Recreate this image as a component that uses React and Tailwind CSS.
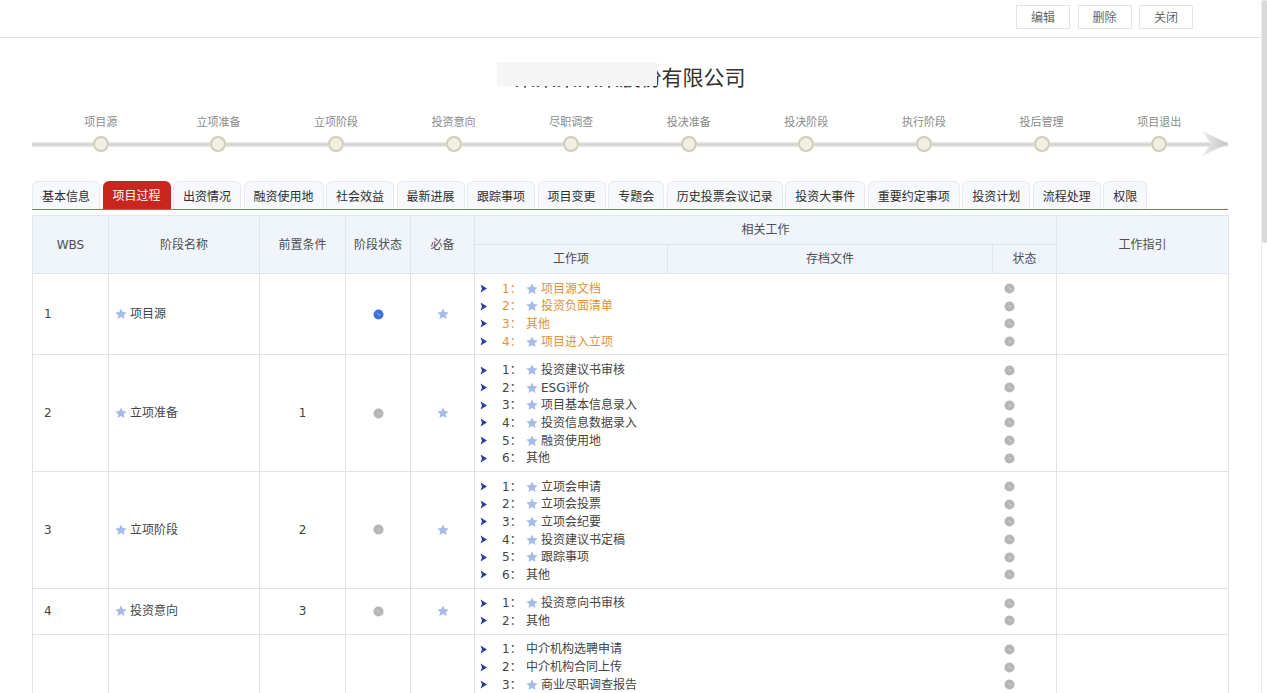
const stages = ['项目源', '立项准备', '立项阶段', '投资意向', '尽职调查', '投决准备', '投决阶段', '执行阶段', '投后管理', '项目退出'];

const tabs = ['基本信息', '项目过程', '出资情况', '融资使用地', '社会效益', '最新进展', '跟踪事项', '项目变更', '专题会', '历史投票会议记录', '投资大事件', '重要约定事项', '投资计划', '流程处理', '权限'];

const rows = [
  {
    wbs: '1', name: '项目源', pre: '', active: true, orange: true,
    items: [['项目源文档', true], ['投资负面清单', true], ['其他', false], ['项目进入立项', true]],
  },
  {
    wbs: '2', name: '立项准备', pre: '1',
    items: [['投资建议书审核', true], ['ESG评价', true], ['项目基本信息录入', true], ['投资信息数据录入', true], ['融资使用地', true], ['其他', false]],
  },
  {
    wbs: '3', name: '立项阶段', pre: '2',
    items: [['立项会申请', true], ['立项会投票', true], ['立项会纪要', true], ['投资建议书定稿', true], ['跟踪事项', true], ['其他', false]],
  },
  {
    wbs: '4', name: '投资意向', pre: '3',
    items: [['投资意向书审核', true], ['其他', false]],
  },
  {
    // cut off by the bottom of the window, only the work items show
    cropped: true,
    items: [['中介机构选聘申请', false], ['中介机构合同上传', false], ['商业尽职调查报告', true]],
  },
];

const Star = ({ className }) => (
  <svg viewBox="0 0 24 24" className={className}>
    <path d="M12 1l3.4 7.2 7.9.9-5.9 5.3 1.7 7.8L12 18.2 4.9 22.200l1.700-7.800L.7 9.100l7.900-.9z" fill="#a6bbe8" />
  </svg>
);

const StatusDot = ({ active }) => (
  <svg viewBox="0 0 12 12" className="h-[11px] w-[11px]">
    <circle cx="6" cy="6" r="5.5" fill={active ? '#3f72d6' : '#b6b6b6'} />
    <path d="M4.6 4.600L6.200 6.200L8 6.600" fill="none" stroke={active ? '#a9c4f2' : '#d6d6d6'} strokeWidth="1" />
  </svg>
);

const Bullet = () => (
  <svg viewBox="0 0 7 9" className="h-[9px] w-[7px] shrink-0">
    <path d="M0.500 0.500L7 4.500L0.500 8.500L2 4.500z" fill="#2a3c9e" />
  </svg>
);

const Rail = ({ className }) => (
  <div className={`h-[5px] bg-linear-to-b from-[#ebebe8] via-[#d2d2ce] to-[#ebebe8] ${className}`} />
);

const Timeline = () => (
  <div className="relative mt-[24px] flex items-end">
    <div className="flex h-[16px] w-[10px] items-center">
      <Rail className="w-full" />
    </div>
    {stages.map((stage) => (
      <div key={stage} className="flex w-[117.6px] flex-col items-center">
        <div className="mb-[6px] h-[15px] text-[11px] leading-[16px] text-[#8a8a8a]">{stage}</div>
        <div className="flex h-[16px] w-full items-center">
          <Rail className="flex-1" />
          <div className="h-[16px] w-[16px] rounded-full border-2 border-[#cfcdb8] bg-[#f0f0e2]" />
          <Rail className="flex-1" />
        </div>
      </div>
    ))}
    <div className="flex h-[16px] flex-1 items-center">
      <Rail className="w-full" />
    </div>
    <svg viewBox="0 0 26 26" className="absolute right-0 bottom-[-5px] h-[26px] w-[26px]">
      <defs>
        <linearGradient id="arrowFill" x1="0" y1="0" x2="1" y2="0">
          <stop offset="0" stopColor="#ededed" />
          <stop offset="1" stopColor="#c2c2c2" />
        </linearGradient>
      </defs>
      <path d="M0 0L26 12.500L0 25L9 12.500z" fill="url(#arrowFill)" />
    </svg>
  </div>
);

const WorkItem = ({ index, label, starred }) => (
  <div className="flex h-[17.6px] items-center">
    <Bullet />
    <span className="ml-[15px] w-[24px] shrink-0 whitespace-nowrap">{index}：</span>
    {starred && <Star className="mr-[3px] h-[12px] w-[12px] shrink-0" />}
    <span className="whitespace-nowrap">{label}</span>
  </div>
);

const headCell = 'border border-[#dde4ef] bg-[#f0f5fc] text-center font-normal text-[#4d4d4d]';
const bodyCell = 'border border-[#e2e2e6] align-middle';

const App = () => {
  return (
    <div className="relative h-[693px] overflow-hidden bg-white font-['DejaVu_Sans','Noto_Sans_CJK_SC',sans-serif] text-[12px] text-[#444]">
      {/* top bar */}
      <div className="flex h-[38px] items-center justify-end gap-[7.5px] border-b border-[#e4e4e4] pr-[74px] pb-[4px] font-['Noto_Sans_CJK_SC',sans-serif]">
        {['编辑', '删除', '关闭'].map((label) => (
          <button key={label} className="h-[24px] w-[54px] border border-[#e4e4e4] bg-white text-[12px] text-[#666]">
            {label}
          </button>
        ))}
      </div>

      <div className="pr-[39px] pl-[32px]">
        {/* title, the start of the name is blanked out */}
        <div className="mt-[24px] flex justify-center">
          <div className="relative whitespace-nowrap font-['Noto_Sans_CJK_SC',sans-serif] text-[21px] leading-[28px] text-[#333]">
            某某某某某股份有限公司
            <div className="absolute top-0 left-[-18px] h-[24px] w-[160px] bg-[#f5f5f5]" />
          </div>
        </div>

        <div className="pt-[1px]">
          <Timeline />
        </div>

        {/* tabs */}
        <div className="mt-[29px] flex h-[28px] gap-[2.5px] font-['Noto_Sans_CJK_SC',sans-serif]">
          {tabs.map((tab, i) => (
            <div
              key={tab}
              className={i === 1
                ? 'flex h-[28px] items-center rounded-t-md bg-[#c9261f] px-[10px] text-white'
                : 'flex h-[28px] items-center rounded-t-md border border-b-0 border-[#e6e9f0] bg-[#f6f8fb] px-[9px] text-[#2e2e2e]'}
            >
              {tab}
            </div>
          ))}
        </div>
        <div className="h-px bg-[#cf5a50]" />

        {/* stage table */}
        <table className="mt-[5px] w-[1196px] table-fixed border-collapse">
          <colgroup>
            <col className="w-[76px]" />
            <col className="w-[151px]" />
            <col className="w-[86px]" />
            <col className="w-[65px]" />
            <col className="w-[64px]" />
            <col className="w-[193px]" />
            <col className="w-[325px]" />
            <col className="w-[64px]" />
            <col className="w-[172px]" />
          </colgroup>
          <thead>
            <tr className="h-[29px]">
              <th rowSpan={2} className={headCell}>WBS</th>
              <th rowSpan={2} className={headCell}>阶段名称</th>
              <th rowSpan={2} className={headCell}>前置条件</th>
              <th rowSpan={2} className={headCell}>阶段状态</th>
              <th rowSpan={2} className={headCell}>必备</th>
              <th colSpan={3} className={headCell}>相关工作</th>
              <th rowSpan={2} className={headCell}>工作指引</th>
            </tr>
            <tr className="h-[29px]">
              <th className={headCell}>工作项</th>
              <th className={headCell}>存档文件</th>
              <th className={headCell}>状态</th>
            </tr>
          </thead>
          <tbody>
            {rows.map((row, r) => (
              <tr key={r}>
                <td className={`${bodyCell} pl-[11px]`}>{row.wbs}</td>
                <td className={`${bodyCell} pl-[6px]`}>
                  {!row.cropped && (
                    <div className="flex items-center gap-[3px]">
                      <Star className="h-[12px] w-[12px]" />
                      {row.name}
                    </div>
                  )}
                </td>
                <td className={`${bodyCell} text-center`}>{row.pre}</td>
                <td className={bodyCell}>
                  {!row.cropped && (
                    <div className="flex justify-center">
                      <StatusDot active={row.active} />
                    </div>
                  )}
                </td>
                <td className={bodyCell}>
                  {!row.cropped && (
                    <div className="flex justify-center">
                      <Star className="h-[12px] w-[12px]" />
                    </div>
                  )}
                </td>
                <td className={`${bodyCell} border-r-0 pt-[6px] pb-[4px] pl-[5px] ${row.orange ? 'text-[#e0913c]' : ''}`}>
                  {row.items.map(([label, starred], i) => (
                    <WorkItem key={label} index={i + 1} label={label} starred={starred} />
                  ))}
                </td>
                <td className={`${bodyCell} border-x-0`} />
                <td className={`${bodyCell} border-l-0 pt-[6px] pb-[4px] pl-[11px]`}>
                  {row.items.map(([label]) => (
                    <div key={label} className="flex h-[17.6px] items-center">
                      <StatusDot />
                    </div>
                  ))}
                </td>
                <td className={bodyCell} />
              </tr>
            ))}
          </tbody>
        </table>
      </div>

      {/* window scrollbar */}
      <div className="absolute top-0 right-0 h-full w-[6px] border-l border-[#ececec] bg-white">
        <div className="h-[243px] w-[5px] rounded-full bg-[#d9d9d9]" />
      </div>
    </div>
  );
};

export default App;
